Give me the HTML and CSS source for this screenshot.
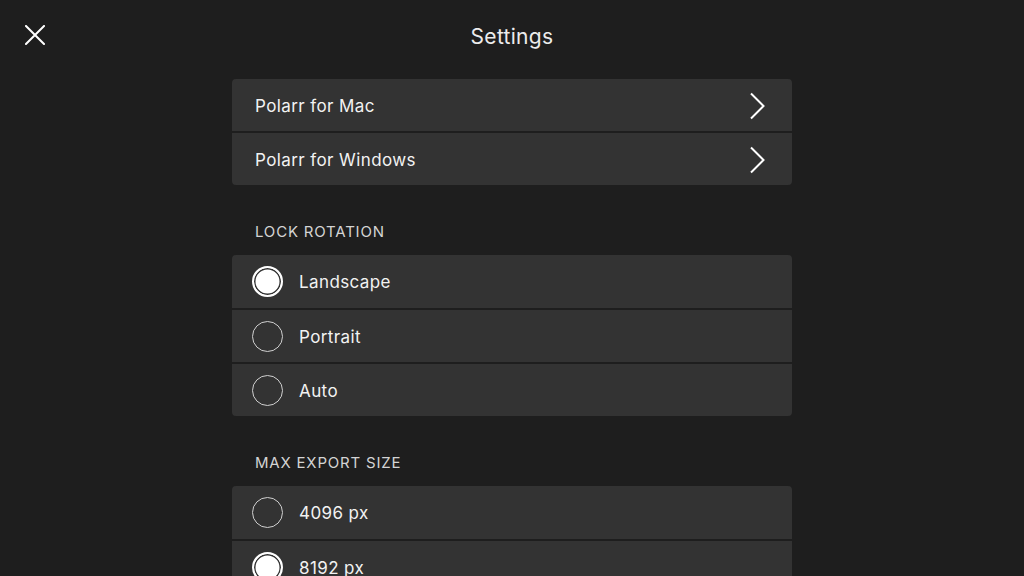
FILE: index.html
```html
<!DOCTYPE html>
<html>
<head>
<meta charset="utf-8">
<link rel="stylesheet" href="styles.css">
</head>
<body>
<div class="topbar">
  <svg class="close" width="20" height="20" viewBox="0 0 20 20"><path d="M1 1 L19 19 M19 1 L1 19" stroke="#fff" stroke-width="2" fill="none" stroke-linecap="square"/></svg>
  <div class="title">Settings</div>
</div>
<div class="content">
  <div class="card">
    <div class="row link"><span class="label">Polarr for Mac</span><svg class="chev" width="17" height="28" viewBox="0 0 17 28"><path d="M3 1.5 L15.5 14 L3 26.5" stroke="#fff" stroke-width="2" fill="none"/></svg></div>
    <div class="row link"><span class="label">Polarr for Windows</span><svg class="chev" width="17" height="28" viewBox="0 0 17 28"><path d="M3 1.5 L15.5 14 L3 26.5" stroke="#fff" stroke-width="2" fill="none"/></svg></div>
  </div>
  <div class="section">LOCK ROTATION</div>
  <div class="card">
    <div class="row radio-row"><span class="radio on"></span><span class="label">Landscape</span></div>
    <div class="row radio-row"><span class="radio"></span><span class="label">Portrait</span></div>
    <div class="row radio-row"><span class="radio"></span><span class="label">Auto</span></div>
  </div>
  <div class="section">MAX EXPORT SIZE</div>
  <div class="card">
    <div class="row radio-row"><span class="radio"></span><span class="label">4096 px</span></div>
    <div class="row radio-row"><span class="radio on"></span><span class="label">8192 px</span></div>
  </div>
</div>
</body>
</html>
```
FILE: styles.css
```css
html, body {
  margin: 0;
  padding: 0;
  background: #1e1e1e;
  height: 100%;
  overflow: hidden;
}
body {
  font-family: Inter, "Noto Sans", sans-serif;
  color: #f2f2f2;
}
.topbar {
  height: 72px;
  position: relative;
  display: flex;
  align-items: center;
  justify-content: center;
}
.close {
  position: absolute;
  left: 25px;
  top: 25px;
}
.title {
  font-size: 21px;
  color: #ececec;
  letter-spacing: 0.3px;
}
.content {
  width: 560px;
  margin: 7px auto 0;
}
.card {
  background: #1e1e1e;
  border-radius: 4px;
  overflow: hidden;
  display: flex;
  flex-direction: column;
  gap: 2px;
}
.row {
  height: 52px;
  background: #333333;
  display: flex;
  align-items: center;
  font-size: 17px;
  letter-spacing: 0.4px;
  padding-top: 1px;
  box-sizing: border-box;
}
.radio-row:first-child {
  height: 53px;
}
.row.link {
  padding: 1px 27px 0 23px;
  justify-content: space-between;
}
.row.radio-row {
  padding-left: 20px;
  gap: 16px;
}
.radio {
  width: 31px;
  height: 31px;
  box-sizing: border-box;
  border-radius: 50%;
  border: 1.5px solid #d0d0d0;
  margin-top: -1px;
}
.radio.on {
  border: 2px solid #fff;
  background: #fff;
  box-shadow: inset 0 0 0 1.5px #333;
}
.section {
  padding: 37px 0 13px 23px;
  line-height: 20px;
  font-size: 15px;
  color: #d4d4d4;
  letter-spacing: 0.8px;
}
```
